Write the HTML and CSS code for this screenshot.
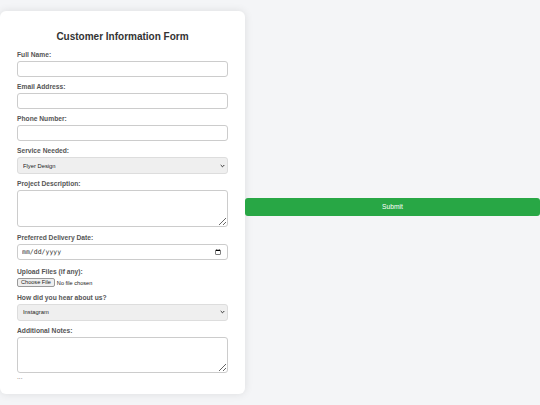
FILE: index.html
```html
<!DOCTYPE html>
<html lang="en">
<head>
  <meta charset="UTF-8">
  <meta name="viewport" content="width=device-width, initial-scale=1.0">
  <title>Customer Information Form</title>
  <link rel="stylesheet" href="styles.css">
</head>
<body>

<form class="form-container" id="customer-form">
  <h2>Customer Information Form</h2>

  <label for="full-name">Full Name:</label>
  <input type="text" id="full-name" name="full-name" required>

  <label for="email">Email Address:</label>
  <input type="email" id="email" name="email" required>

  <label for="phone">Phone Number:</label>
  <input type="tel" id="phone" name="phone">

  <label for="service">Service Needed:</label>
  <div class="select-wrap">
    <select id="service" name="service">
      <option>Flyer Design</option>
      <option>Logo Design</option>
      <option>Business Cards</option>
      <option>Social Media Graphics</option>
    </select>
    <svg class="chevron" width="5" height="4" viewBox="0 0 5 4"><path d="M0.7 1 L2.5 2.8 L4.3 1" fill="none" stroke="#333" stroke-width="1"/></svg>
  </div>

  <label for="description">Project Description:</label>
  <textarea id="description" name="description" class="tall-gap"></textarea>

  <label for="delivery">Preferred Delivery Date:</label>
  <input type="date" id="delivery" name="delivery">

  <label for="files">Upload Files (if any):</label>
  <input type="file" id="files" name="files">

  <label for="source">How did you hear about us?</label>
  <div class="select-wrap">
    <select id="source" name="source">
      <option>Instagram</option>
      <option>Facebook</option>
      <option>Google</option>
      <option>Friend</option>
    </select>
    <svg class="chevron" width="5" height="4" viewBox="0 0 5 4"><path d="M0.7 1 L2.5 2.8 L4.3 1" fill="none" stroke="#333" stroke-width="1"/></svg>
  </div>

  <label for="notes">Additional Notes:</label>
  <textarea id="notes" name="notes" class="last-field"></textarea>

  <p class="more">...</p>
</form>

<button type="submit" form="customer-form" class="submit-btn">Submit</button>

</body>
</html>
```

FILE: styles.css
```css
body {
  font-family: "Liberation Sans", Arial, sans-serif;
  margin: 0;
  padding: 0;
  min-height: 100vh;
  background-color: #f4f5f7;
  display: flex;
  align-items: center;
}
.form-container {
  box-sizing: border-box;
  width: 245px;
  flex-shrink: 0;
  background-color: #fff;
  padding: 20px 17px 13px;
  border-radius: 6px;
  box-shadow: 0 0 8px rgba(0, 0, 0, 0.1);
}
h2 {
  margin: 0 0 8px;
  font-size: 10px;
  line-height: 12px;
  text-align: center;
  color: #333;
}
label {
  display: block;
  font-size: 6.7px;
  line-height: 8px;
  font-weight: bold;
  color: #555;
  margin-bottom: 2px;
}
input[type="text"], input[type="email"], input[type="tel"], input[type="date"], select, textarea {
  display: block;
  box-sizing: border-box;
  width: 100%;
  height: 16px;
  margin: 0 0 6px;
  padding: 0 5px;
  border: 1px solid #ccc;
  border-radius: 3px;
  font-family: "Liberation Sans", Arial, sans-serif;
  font-size: 5.8px;
  color: #222;
  background-color: #fff;
}
textarea {
  height: 36.5px;
  resize: vertical;
}
textarea.tall-gap {
  margin-bottom: 7px;
}
textarea.last-field {
  margin-bottom: 0;
}

/* dropdowns: flat grey box with a small chevron on the right */
.select-wrap {
  position: relative;
  margin-bottom: 6px;
}
.select-wrap select {
  -webkit-appearance: none;
  appearance: none;
  height: 17px;
  margin: 0;
  background-color: #efefef;
  border-color: #ddd;
}
.chevron {
  position: absolute;
  right: 3px;
  top: 6.5px;
  pointer-events: none;
}

input[type="date"] {
  margin-bottom: 8px;
  padding: 0 4px;
  font-family: "DejaVu Sans Mono", "Liberation Mono", monospace;
  font-size: 6.5px;
  color: #333;
}
input[type="date"]::-webkit-datetime-edit-text,
input[type="date"]::-webkit-datetime-edit-month-field,
input[type="date"]::-webkit-datetime-edit-day-field,
input[type="date"]::-webkit-datetime-edit-year-field {
  padding: 0;
  margin: 0;
}
input[type="date"]::-webkit-calendar-picker-indicator {
  width: 6px;
  height: 6px;
  padding: 0;
  margin: 0 2px 0 0;
}
input[type="file"] {
  display: block;
  height: 9px;
  margin: 0 0 7px;
  padding: 0;
  font-size: 5.6px;
  line-height: 9px;
  font-family: "Liberation Sans", Arial, sans-serif;
  color: #222;
}
input[type="file"]::file-selector-button {
  height: 9px;
  margin: 0 2px 0 0;
  padding: 0 3px;
  font-size: 5.6px;
  font-family: "Liberation Sans", Arial, sans-serif;
  color: #222;
  background-color: #efefef;
  border: 1px solid #999;
  border-radius: 2px;
}
.more {
  margin: 0;
  font-size: 6.7px;
  line-height: 8px;
  color: #777;
}
.submit-btn {
  flex: 1;
  height: 18px;
  margin-top: 8px;
  padding: 0;
  background-color: #28a745;
  color: white;
  border: none;
  border-radius: 3px;
  font-family: "Liberation Sans", Arial, sans-serif;
  font-size: 6.7px;
  cursor: pointer;
}
.submit-btn:hover {
  background-color: #218838;
}
```
